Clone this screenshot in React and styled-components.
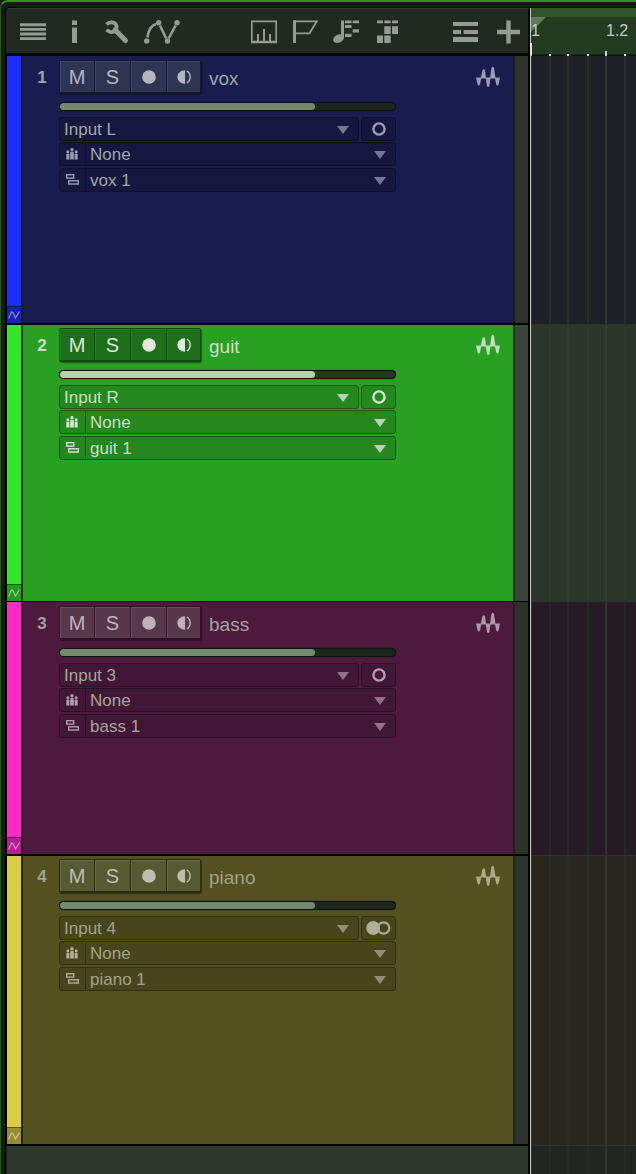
import React, { useState } from "react";
import styled, { createGlobalStyle, ThemeProvider } from "styled-components";

const GlobalStyle = createGlobalStyle`
  *, *::before, *::after { box-sizing: border-box; }
  body { margin: 0; background: #151a14; }
  button, select, input { font-family: inherit; margin: 0; padding: 0; }
  svg { display: block; flex: none; }
`;

const themes = {
  blue: {
    strip: "#1c2cff", stripLow: "#1722b4", body: "#191c4e", edge: "#1a2018", meter: "#2d332a",
    btn: "#2e3552", btnEdge: "#141731", btnShine: "#3d4567", glyph: "#b4b6c0",
    field: "#151741", fieldEdge: "#101229", text: "#9fa8a3", arrow: "#767893", icon: "#9c9eb0",
    fader: "#75896f", rail: "#1d261b", wave: "#9b9cb4", lane: "#1f1f28", line: "#252e29", beat: "#2f3831",
  },
  green: {
    strip: "#30e829", stripLow: "#249a1e", body: "#2aa022", edge: "#17310f", meter: "#3b463a",
    btn: "#1e6f19", btnEdge: "#124a10", btnShine: "#27801f", glyph: "#deebdd",
    field: "#25881e", fieldEdge: "#17590f", text: "#cbdfc8", arrow: "#bcd0b9", icon: "#d5e6d2",
    fader: "#bfc9bd", rail: "#283427", wave: "#c5dcc2", lane: "#2b352a", line: "#2e392e", beat: "#364136",
  },
  magenta: {
    strip: "#ff29c8", stripLow: "#b41f91", body: "#4d1a3e", edge: "#241c1f", meter: "#2b3329",
    btn: "#573749", btnEdge: "#2e1226", btnShine: "#6a4a5c", glyph: "#bfb3ba",
    field: "#421636", fieldEdge: "#2c1025", text: "#a3a59c", arrow: "#8f7286", icon: "#b09fab",
    fader: "#75896f", rail: "#1d261b", wave: "#ad98a7", lane: "#261a24", line: "#212b25", beat: "#2d362f",
  },
  yellow: {
    strip: "#dacd43", stripLow: "#968d30", body: "#545020", edge: "#1f2318", meter: "#2c352b",
    btn: "#565a31", btnEdge: "#2b2b14", btnShine: "#686c42", glyph: "#bdbeb0",
    field: "#48441b", fieldEdge: "#302e13", text: "#9ea48b", arrow: "#918f72", icon: "#afae98",
    fader: "#72896f", rail: "#1d261d", wave: "#acab90", lane: "#28261d", line: "#242e25", beat: "#323729",
  },
};

const grid = (line, beat) => `repeating-linear-gradient(to right,
  transparent 0 19px, ${line} 19px 21px,
  transparent 21px 37px, ${line} 37px 39px,
  transparent 39px 57px, ${line} 57px 59px,
  transparent 59px 75px)`
  + "," + `repeating-linear-gradient(to right, ${beat} 0 2px, transparent 2px 75px)`;

const Frame = styled.main`
  min-height: 100vh;
  display: flex;
  flex-direction: column;
  padding: 5px 0 0 4px;
  background: #151a14;
  border-top: 2px solid #37901d;
  border-left: 1px solid #245a17;
  border-top-left-radius: 8px;
  font-family: "Liberation Sans", Arial, sans-serif;
`;

const Editor = styled.div`
  position: relative;
  flex: 1;
  display: flex;
  flex-direction: column;
  border-top: 1px solid #000;
  border-left: 1px solid #000;
  border-top-left-radius: 4px;
  overflow: hidden;
`;

const TopRow = styled.header`
  display: flex;
  height: 48px;
`;

const Toolbar = styled.div`
  flex: none;
  width: 524px;
  display: flex;
  align-items: center;
  padding-left: 6px;
  background: #212a20;
  border-top: 1px solid #2d362c;
  border-right: 2px solid #050705;
  border-bottom: 3px solid #050705;
`;

const ToolGroup = styled.div`
  display: flex;
  flex: none;
  gap: ${(p) => p.$gap || 0}px;
  margin-left: ${(p) => p.$before || 0}px;
`;

const ToolButton = styled.button`
  flex: none;
  display: grid;
  place-items: center;
  width: ${(p) => p.$w}px;
  height: 32px;
  border: 0;
  background: none;
  color: #959b94;
  cursor: pointer;
`;

const Ruler = styled.div`
  position: relative;
  flex: 1;
  min-width: 0;
  display: flex;
  overflow: hidden;
  border-top: 9px solid #315428;
  background: linear-gradient(to top, #14270f 0 2px, transparent 2px), #233b20;
  box-shadow: inset 0 -1px #0b140a;
`;

const Ticks = styled.div`
  position: absolute;
  inset: auto 0 0 0;
  height: ${(p) => (p.$beat ? 5 : 2)}px;
  background: ${(p) =>
    p.$beat
      ? "repeating-linear-gradient(to right, #c9d0c7 0 2px, transparent 2px 75px)"
      : grid("#dfe4dd", "transparent")};
`;

const Flag = styled.svg`
  position: absolute;
  top: 0;
  left: 1px;
`;

const Beat = styled.span`
  position: relative;
  flex: none;
  width: 75px;
  padding: 5px 0 0 1px;
  font-size: 16px;
  line-height: 18px;
  color: #c3cbc1;
`;

const Playhead = styled.div`
  position: absolute;
  top: 0;
  bottom: 0;
  left: 524px;
  width: 1px;
  background: #c3c5c2;

  &::before {
    content: "";
    position: absolute;
    top: 35px;
    left: 0;
    width: 2px;
    height: 12px;
    background: #dfe2de;
  }
`;

const TrackRow = styled.section`
  display: flex;
  min-height: ${(p) => p.$height}px;
`;

const TrackPanel = styled.div`
  flex: none;
  width: 524px;
  display: flex;
  padding-left: 1px;
  background: #020402;
  border-right: 2px solid #050705;
  border-bottom: ${(p) => p.$rule}px solid #020402;
`;

const Strip = styled.div`
  width: 16px;
  display: flex;
  flex-direction: column;
  justify-content: flex-end;
  background: ${(p) => p.theme.strip};
  border-right: 2px solid ${(p) => p.theme.edge};
`;

const StripButton = styled.button`
  display: grid;
  place-items: center;
  height: 17px;
  border: 0;
  border-top: 1px solid rgba(0, 0, 0, 0.4);
  background: ${(p) => p.theme.stripLow};
  color: rgba(255, 255, 255, 0.5);
`;

const Body = styled.div`
  flex: 1;
  padding-top: ${(p) => p.$top}px;
  background: ${(p) => p.theme.body};
  border-right: 2px solid ${(p) => p.theme.edge};
`;

const Meter = styled.div`
  width: 13px;
  background: ${(p) => p.theme.meter};
`;

const Lane = styled.div`
  flex: 1;
  background: ${(p) => grid(p.theme.line, p.theme.beat)}, ${(p) => p.theme.lane};
  border-bottom: 1px solid #2a332b;
`;

const Heading = styled.div`
  display: flex;
  align-items: center;
  height: 34px;
  padding-right: 13px;
`;

const TrackNumber = styled.span`
  width: 36px;
  padding: 1px 0 0 2px;
  text-align: center;
  font-size: 17px;
  line-height: 21px;
  font-weight: bold;
  color: ${(p) => p.theme.text};
`;

const ButtonBar = styled.div`
  display: grid;
  grid-template-columns: 35px 36px 36px 33px;
  height: 34px;
  border: 1px solid ${(p) => p.theme.btnEdge};
  border-bottom-width: 2px;
  border-radius: 2px;
  box-shadow: 1px 1px 1px rgba(0, 0, 0, 0.4);
  background: ${(p) => p.theme.btnEdge};
`;

const ChannelButton = styled.button`
  display: grid;
  place-items: center;
  border: 0;
  border-top: 1px solid ${(p) => p.theme.btnShine};
  border-left: 1px solid ${(p) => p.theme.btnShine};
  margin-right: 1px;
  padding: 0 1px 1px 0;
  background: ${(p) => p.theme.btn};
  color: ${(p) => p.theme.glyph};
  font-size: 20px;
  line-height: 24px;
  cursor: pointer;

  &:last-child { margin-right: 0; }
`;

const TrackName = styled.span`
  flex: 1;
  padding: 3px 0 0 8px;
  font-size: 19px;
  line-height: 23px;
  color: ${(p) => p.theme.text};
`;

const WaveIcon = styled.svg`
  color: ${(p) => p.theme.wave};
`;

const Controls = styled.div`
  width: 337px;
  margin: 8px 0 0 36px;
`;

const Fader = styled.label`
  position: relative;
  display: block;
  height: 9px;
  margin-bottom: 6px;
  border: 1px solid #0c110b;
  border-radius: 5px;
  box-shadow: 0 0 1px #0c110b;
  background: ${(p) => p.theme.rail};
`;

const FaderFill = styled.div`
  height: 7px;
  border-radius: 4px;
  background: ${(p) => p.theme.fader};
`;

const FaderInput = styled.input`
  position: absolute;
  inset: 0;
  width: 100%;
  height: 100%;
  opacity: 0;
  cursor: pointer;
`;

const InputRow = styled.div`
  display: flex;
  gap: 2px;
  margin-bottom: 1px;
`;

const Routing = styled.div`
  display: flex;
  flex-direction: column;
  gap: 2px;
`;

const Field = styled.label`
  position: relative;
  flex: 1;
  display: flex;
  align-items: stretch;
  min-height: 24px;
  border: 1px solid ${(p) => p.theme.fieldEdge};
  border-radius: 3px;
  background: ${(p) => p.theme.field};
`;

const FieldIcon = styled.span`
  display: grid;
  place-items: center;
  width: 26px;
  padding-right: 1px;
  border-right: 1px solid ${(p) => p.theme.fieldEdge};
  color: ${(p) => p.theme.icon};
`;

const Select = styled.select`
  flex: 1;
  min-width: 0;
  appearance: none;
  border: 0;
  padding: 1px 0 0 4px;
  background: transparent;
  color: ${(p) => p.theme.text};
  font-size: 17px;
  line-height: 21px;
`;

const Arrow = styled.svg`
  position: absolute;
  top: 8px;
  right: 9px;
  pointer-events: none;
  color: ${(p) => p.theme.arrow};
`;

const FormatButton = styled.button`
  display: grid;
  place-items: center;
  width: 35px;
  height: 24px;
  border: 1px solid ${(p) => p.theme.fieldEdge};
  border-radius: 3px;
  background: ${(p) => p.theme.field};
  color: ${(p) => p.theme.icon};
`;

const Remainder = styled.div`
  flex: 1;
  display: flex;
  min-height: 28px;
`;

const EmptyPanel = styled.div`
  flex: none;
  width: 524px;
  background: #2c392b;
  border-left: 1px solid #1a2219;
  border-right: 2px solid #050705;
`;

const EmptyLane = styled.div`
  flex: 1;
  background: ${grid("#242c27", "#2d3630")}, #212623;
`;

function DropArrow() {
  return (
    <Arrow width="12" height="8" viewBox="0 0 12 8" aria-hidden="true">
      <path d="M0 0H12L6 8Z" fill="currentColor" />
    </Arrow>
  );
}

function PeopleIcon() {
  return (
    <svg width="12" height="12" viewBox="0 0 12 12" fill="currentColor" aria-hidden="true">
      <circle cx="6" cy="1.8" r="1.7" />
      <path d="M4.2 4.2Q6 3.2 7.8 4.2V11.5H4.2Z" />
      <circle cx="1.8" cy="3.7" r="1.5" />
      <path d="M0.3 6Q2 5 3.4 6V11.5H0.3Z" />
      <circle cx="10.2" cy="3.7" r="1.5" />
      <path d="M8.6 6Q10 5 11.7 6V11.5H8.6Z" />
    </svg>
  );
}

function LayersIcon() {
  return (
    <svg width="13" height="12" viewBox="0 0 13 12" fill="none" stroke="currentColor" strokeWidth="1.4" aria-hidden="true">
      <rect x="0.7" y="0.7" width="7" height="3.4" />
      <rect x="2.7" y="6.8" width="9.6" height="3.2" />
    </svg>
  );
}

const tools = {
  menu: [28, <path d="M1 7.8H27M1 12.4H27M1 17H27M1 21.6H27" stroke="currentColor" strokeWidth="2.9" />],
  info: [28, <path d="M11 3.5H16V8H11ZM11 10.5H16V26H11Z" fill="currentColor" />],
  wrench: [28,
    <g fill="none" stroke="currentColor">
      <path d="M3.6 7.4C6 4.6 11.6 4.4 13.3 8.2C14.8 12.2 11.2 15.8 7.2 14.9Q5 14.3 3.6 12.8" strokeWidth="3.8" />
      <path d="M12 12.8L22.5 23.5" strokeWidth="5" strokeLinecap="round" />
    </g>],
  curve: [38,
    <g fill="currentColor">
      <path d="M4.5 20.5C5.2 13.5 8.5 8.5 13 7M17 8.5L23.2 21.5M25.6 21.5L32.6 8.5" fill="none" stroke="currentColor" strokeWidth="2.6" />
      <circle cx="3.7" cy="24" r="2.7" />
      <circle cx="15.7" cy="5.8" r="2.7" />
      <circle cx="24.5" cy="24" r="2.7" />
      <circle cx="34" cy="5.8" r="2.7" />
    </g>],
  ruler: [27,
    <g fill="none" stroke="currentColor">
      <path d="M0.8 4.3H25.2V25.2H0.8Z" strokeWidth="1.7" />
      <path d="M0 25H26" strokeWidth="2.4" />
      <path d="M7 17V25M13 12V25M19 17V25" strokeWidth="2" />
    </g>],
  flag: [27,
    <g fill="none" stroke="currentColor">
      <path d="M2.5 3.2V26" strokeWidth="3" />
      <path d="M2 4.3H24.8L17.5 16.3H3" strokeWidth="1.8" />
    </g>],
  note: [27,
    <g fill="currentColor">
      <path d="M8 3.5H11V20.5H8Z" />
      <ellipse cx="5.6" cy="21.6" rx="5.6" ry="4" transform="rotate(-25 5.6 21.6)" />
      <path d="M12 3.5H18.5V6.3H12ZM12 8H18.5V11H12ZM12 16.7H18.5V20H12ZM19.7 3.5H26V6.3H19.7ZM19.7 12.3H26V15.6H19.7Z" />
    </g>],
  pattern: [27,
    <path d="M3 3.5H9V6.3H3ZM10.3 3.5H16.7V6.3H10.3ZM18 3.5H24V6.3H18ZM10.3 9.3H16.7V17H10.3ZM18 9.3H24V17H18ZM3 18.5H9V26H3ZM10.3 18.5H16.7V26H10.3Z" fill="currentColor" />],
  list: [27,
    <path d="M1 5H26V9H1ZM1 13H9V17H1ZM11.6 13H26V17H11.6ZM1 20H26V25H1Z" fill="currentColor" />],
  add: [27, <path d="M2 15H25M13.5 3.5V26.5" stroke="currentColor" strokeWidth="4.4" />],
};

function Tool({ name, label, width }) {
  const [w, art] = tools[name];
  return (
    <ToolButton type="button" aria-label={label} $w={width}>
      <svg width={w} height="28" viewBox={`0 0 ${w} 28`} aria-hidden="true">{art}</svg>
    </ToolButton>
  );
}

function ChannelButtons() {
  return (
    <ButtonBar>
      <ChannelButton type="button" title="Mute">M</ChannelButton>
      <ChannelButton type="button" title="Solo">S</ChannelButton>
      <ChannelButton type="button" aria-label="Record">
        <svg width="14" height="14" viewBox="0 0 14 14"><circle cx="7" cy="7" r="6.8" fill="currentColor" /></svg>
      </ChannelButton>
      <ChannelButton type="button" aria-label="Monitor">
        <svg width="14" height="14" viewBox="0 0 14 14">
          <path d="M8 0.3V13.7C3.6 13.7 0.4 10.6 0.4 7C0.4 3.4 3.6 0.3 8 0.3Z" fill="currentColor" />
          <path d="M9.8 1.2C14.2 3 14.2 11 9.8 12.8" fill="none" stroke="currentColor" strokeWidth="1.4" />
        </svg>
      </ChannelButton>
    </ButtonBar>
  );
}

function SelectField({ label, value, icon }) {
  return (
    <Field>
      {icon && <FieldIcon>{icon}</FieldIcon>}
      <Select aria-label={label} defaultValue={value}>
        <option>{value}</option>
      </Select>
      <DropArrow />
    </Field>
  );
}

function Track({ number, name, input, stereo, theme, height, rule, top }) {
  const [level, setLevel] = useState(76);
  return (
    <ThemeProvider theme={themes[theme]}>
      <TrackRow $height={height}>
        <TrackPanel $rule={rule}>
          <Strip>
            <StripButton type="button" aria-label="Show automation">
              <svg width="12" height="10" viewBox="0 0 12 10">
                <path d="M0.5 8.5L3.5 2L5 2.6L7.5 8L11.5 1.5" fill="none" stroke="currentColor" strokeWidth="1.2" />
              </svg>
            </StripButton>
          </Strip>
          <Body $top={top}>
            <Heading>
              <TrackNumber>{number}</TrackNumber>
              <ChannelButtons />
              <TrackName>{name}</TrackName>
              <WaveIcon width="24" height="22" viewBox="0 0 24 22" aria-hidden="true">
                <path
                  d="M0 11.4H5.4L4 18.5Q2.7 20.4 1.6 18.5ZM4.6 12.4L6.4 4.6Q7.8 2 9 4.6L10.2 12.4ZM9.6 11.4H14.6L13.4 20Q12.2 22 11 20ZM14 12.4L15.4 2Q16.7 -0.6 18 2L19.6 12.4ZM18.8 11.4H24L22.6 18.5Q21.4 20.4 20.2 18.5Z"
                  fill="currentColor"
                />
              </WaveIcon>
            </Heading>
            <Controls>
              <Fader>
                <FaderFill style={{ width: `${level}%` }} />
                <FaderInput
                  type="range"
                  aria-label={`${name} volume`}
                  value={level}
                  onChange={(e) => setLevel(Number(e.target.value))}
                />
              </Fader>
              <InputRow>
                <SelectField label="Input" value={input} />
                <FormatButton type="button" aria-label={stereo ? "Stereo" : "Mono"}>
                  {stereo ? (
                    <svg width="25" height="14" viewBox="0 0 25 14">
                      <circle cx="17.6" cy="7" r="5.7" fill="none" stroke="currentColor" strokeWidth="2.2" />
                      <circle cx="7.2" cy="7" r="6.9" fill="currentColor" />
                    </svg>
                  ) : (
                    <svg width="14" height="14" viewBox="0 0 14 14">
                      <circle cx="7" cy="7" r="5.6" fill="none" stroke="currentColor" strokeWidth="2.4" />
                    </svg>
                  )}
                </FormatButton>
              </InputRow>
              <Routing>
                <SelectField label="Group" value="None" icon={<PeopleIcon />} />
                <SelectField label="Layer" value={`${name} 1`} icon={<LayersIcon />} />
              </Routing>
            </Controls>
          </Body>
          <Meter />
        </TrackPanel>
        <Lane />
      </TrackRow>
    </ThemeProvider>
  );
}

const tracks = [
  { number: 1, name: "vox", input: "Input L", theme: "blue", height: 269, rule: 2, top: 4 },
  { number: 2, name: "guit", input: "Input R", theme: "green", height: 277, rule: 1, top: 3 },
  { number: 3, name: "bass", input: "Input 3", theme: "magenta", height: 254, rule: 2, top: 4 },
  { number: 4, name: "piano", input: "Input 4", stereo: true, theme: "yellow", height: 290, rule: 2, top: 3 },
];

export default function App() {
  return (
    <>
      <GlobalStyle />
      <Frame>
        <Editor>
          <TopRow>
            <Toolbar>
              <ToolGroup>
                <Tool name="menu" label="Track list" width={42} />
                <Tool name="info" label="Inspector" width={42} />
                <Tool name="wrench" label="Options" width={42} />
                <Tool name="curve" label="Automation" width={48} />
              </ToolGroup>
              <ToolGroup $before={58}>
                <Tool name="ruler" label="Ruler" width={41} />
                <Tool name="flag" label="Markers" width={41} />
                <Tool name="note" label="Chords" width={41} />
                <Tool name="pattern" label="Arranger" width={41} />
              </ToolGroup>
              <ToolGroup $before={40} $gap={8}>
                <Tool name="list" label="Track layout" width={35} />
                <Tool name="add" label="Add track" width={35} />
              </ToolGroup>
            </Toolbar>
            <Ruler>
              <Ticks />
              <Ticks $beat />
              <Flag width="15" height="15" viewBox="0 0 15 15" aria-hidden="true">
                <path d="M0 0H15L0 15Z" fill="#5d7b58" />
              </Flag>
              <Beat>1</Beat>
              <Beat>1.2</Beat>
            </Ruler>
          </TopRow>
          {tracks.map((t) => <Track key={t.number} {...t} />)}
          <Remainder>
            <EmptyPanel />
            <EmptyLane />
          </Remainder>
          <Playhead />
        </Editor>
      </Frame>
    </>
  );
}
